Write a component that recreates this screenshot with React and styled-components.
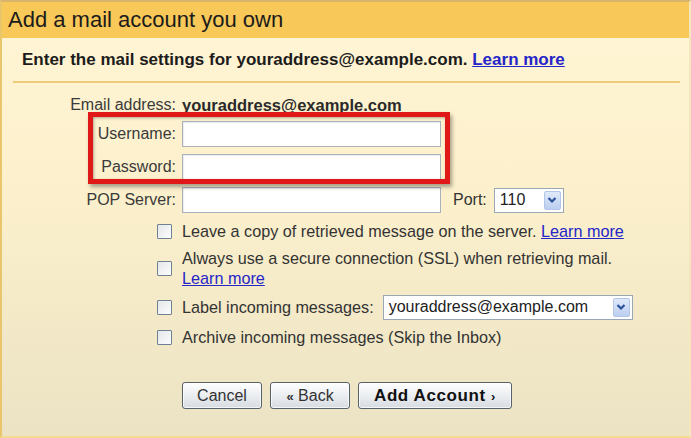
import React from 'react';
import styled, { createGlobalStyle } from 'styled-components';

const GlobalStyle = createGlobalStyle`
  html, body {
    margin: 0;
    padding: 0;
    background: #ebe3c4;
  }
  body {
    font-family: "Liberation Sans", Arial, sans-serif;
    color: #222;
  }
`;

const Chevron = () => (
  <svg width="10" height="8" viewBox="0 0 10 8">
    <path d="M1.5 2 L5 5.5 L8.5 2" fill="none" stroke="#2b4f9a" strokeWidth="2.2" />
  </svg>
);

const App = () => (
  <>
    <GlobalStyle />
    <Frame>
      <Header>
        <Title>Add a mail account you own</Title>
      </Header>
      <Body>
        <Intro>
          Enter the mail settings for youraddress@example.com. <Link>Learn more</Link>
        </Intro>
        <Form>
          <Row height={24}>
            <Label>Email address:</Label>
            <Value>youraddress@example.com</Value>
          </Row>
          <Highlighted>
            <Row height={33}>
              <Label>Username:</Label>
              <TextInput />
            </Row>
            <Row height={33}>
              <Label>Password:</Label>
              <TextInput />
            </Row>
            <RedBox />
          </Highlighted>
          <Row height={34}>
            <Label>POP Server:</Label>
            <TextInput />
            <PortLabel>Port:</PortLabel>
            <Select width={70}>
              <span>110</span>
              <DropButton><Chevron /></DropButton>
            </Select>
          </Row>
          <Options>
            <Option height={28}>
              <CheckBox />
              <OptionText>
                Leave a copy of retrieved message on the server. <Link>Learn more</Link>
              </OptionText>
            </Option>
            <Option height={46}>
              <CheckBox />
              <OptionText>
                Always use a secure connection (SSL) when retrieving mail.
                <br />
                <Link>Learn more</Link>
              </OptionText>
            </Option>
            <Option height={32}>
              <CheckBox />
              <OptionText>Label incoming messages:</OptionText>
              <Select width={250}>
                <span>youraddress@example.com</span>
                <DropButton><Chevron /></DropButton>
              </Select>
            </Option>
            <Option height={28}>
              <CheckBox />
              <OptionText>Archive incoming messages (Skip the Inbox)</OptionText>
            </Option>
          </Options>
          <Buttons>
            <Button>Cancel</Button>
            <Button><Small>«</Small> Back</Button>
            <Button primary>Add Account <Small>›</Small></Button>
          </Buttons>
        </Form>
      </Body>
    </Frame>
  </>
);

const Frame = styled.div`
  width: 691px;
  height: 438px;
  box-sizing: border-box;
  border-top: 2px solid #d9b46c;
  border-left: 2px solid #e9c56b;
  border-right: 2px solid #f4e6bd;
  border-bottom: 2px solid #f2dc92;
  display: flex;
  flex-direction: column;
  overflow: hidden;
`;

const Header = styled.div`
  height: 36px;
  flex: none;
  background: #f8c858;
  display: flex;
  align-items: center;
  padding-left: 6px;
`;

const Title = styled.h1`
  margin: 0;
  font-size: 22px;
  font-weight: normal;
  color: #1b1b1b;
`;

const Body = styled.div`
  flex: 1;
  background: linear-gradient(#fff4d3, #fcf0cc 40%, #ebe3c4);
`;

const Intro = styled.div`
  margin: 0 9px 0 11px;
  padding: 12px 0 11px 9px;
  border-bottom: 2px solid #eecb78;
  font-size: 17px;
  font-weight: bold;
  color: #1c1c1c;
`;

const Link = styled.a`
  color: #2525c8;
  text-decoration: underline;
  font-weight: inherit;
  cursor: pointer;
`;

const Form = styled.div`
  padding-top: 10px;
  font-size: 16px;
  color: #333;
`;

const Row = styled.div`
  display: flex;
  align-items: center;
  height: ${(p) => p.height}px;
`;

const Label = styled.div`
  width: 174px;
  text-align: right;
  margin-right: 6px;
  color: #3a3a3a;
`;

const Value = styled.div`
  font-weight: bold;
  font-size: 16.5px;
  color: #2a2a2a;
`;

const Highlighted = styled.div`
  position: relative;
`;

const RedBox = styled.div`
  position: absolute;
  left: 86px;
  top: -5px;
  width: 362px;
  height: 72px;
  box-sizing: border-box;
  border: 5px solid #e01818;
  box-shadow: 2px 3px 4px rgba(0, 0, 0, 0.35), inset 1px 1px 3px rgba(0, 0, 0, 0.3);
  pointer-events: none;
`;

const TextInput = styled.div`
  width: 259px;
  height: 26px;
  box-sizing: border-box;
  background: #fff;
  border: 1px solid #a9b2bc;
  box-shadow: inset 1px 1px 1px rgba(0, 0, 0, 0.08);
`;

const PortLabel = styled.div`
  margin: 0 7px 0 12px;
  color: #333;
`;

const Select = styled.div`
  width: ${(p) => p.width}px;
  height: 25px;
  box-sizing: border-box;
  background: #fff;
  border: 1px solid #9aa7b5;
  display: flex;
  align-items: center;
  justify-content: space-between;
  padding: 0 2px 0 5px;
  color: #222;
`;

const DropButton = styled.div`
  width: 17px;
  height: 19px;
  box-sizing: border-box;
  border: 1px solid #b3c6e6;
  border-radius: 2px;
  background: linear-gradient(#dfe9fa, #bccff0);
  display: flex;
  align-items: center;
  justify-content: center;
`;

const Options = styled.div`
  display: flex;
  flex-direction: column;
  padding-left: 155px;
`;

const Option = styled.div`
  display: flex;
  align-items: center;
  height: ${(p) => p.height}px;
`;

const CheckBox = styled.div`
  width: 15px;
  height: 15px;
  flex: none;
  box-sizing: border-box;
  border: 1px solid #6f8192;
  border-radius: 1px;
  background: linear-gradient(135deg, #e4e6e8, #fdfdfd);
  margin-right: 10px;
`;

const OptionText = styled.div`
  line-height: 20px;
  font-size: 16.2px;
  color: #333;
  margin-right: 9px;
`;

const Buttons = styled.div`
  display: flex;
  gap: 8px;
  padding: 31px 0 0 180px;
`;

const Button = styled.button`
  height: 27px;
  box-sizing: border-box;
  padding: 0 ${(p) => (p.primary ? 15 : 11)}px;
  min-width: 80px;
  font-family: "Liberation Sans", Arial, sans-serif;
  font-size: ${(p) => (p.primary ? 17 : 16)}px;
  font-weight: ${(p) => (p.primary ? 'bold' : 'normal')};
  letter-spacing: ${(p) => (p.primary ? 0.6 : 0)}px;
  color: ${(p) => (p.primary ? '#111' : '#333')};
  border: 1px solid #56616b;
  border-radius: 3px;
  background: linear-gradient(#ffffff, #e9ecef 55%, #d7dce1);
  box-shadow: inset 0 0 0 1px rgba(255, 255, 255, 0.7);
`;

const Small = styled.span`
  font-size: 13px;
  font-weight: bold;
`;

export default App;
